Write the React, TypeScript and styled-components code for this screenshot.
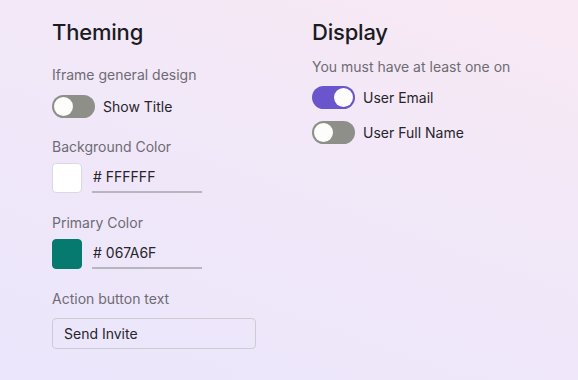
import React, { FC } from 'react';
import styled, { createGlobalStyle } from 'styled-components';

const GlobalStyle = createGlobalStyle`
    html, body {
        margin: 0;
        padding: 0;
    }
    body {
        font-family: Inter, "Noto Sans", "Liberation Sans", sans-serif;
    }
`;

const Page = styled.div`
    width: 578px;
    height: 380px;
    box-sizing: border-box;
    padding: 17px 52px 0 52px;
    display: grid;
    grid-template-columns: 260px 1fr;
    background: linear-gradient(200deg, #f9e9f4 0%, #f1e8f8 45%, #ebe6fc 100%);
    overflow: hidden;
`;

const Column = styled.div`
    display: flex;
    flex-direction: column;
`;

const Heading = styled.h2`
    margin: 0;
    font-size: 22px;
    font-weight: 500;
    line-height: 30px;
    color: #1c1b1f;
    letter-spacing: -0.2px;
`;

const Label = styled.div<{ $top: number }>`
    margin-top: ${(p) => p.$top}px;
    font-size: 14px;
    line-height: 18px;
    color: #6f6b73;
`;

const ToggleRow = styled.div<{ $top: number }>`
    margin-top: ${(p) => p.$top}px;
    display: flex;
    align-items: center;
    gap: 8px;
    font-size: 14px;
    color: #27252b;
`;

const Track = styled.div<{ $on?: boolean }>`
    width: 43px;
    height: 23px;
    box-sizing: border-box;
    padding: 2px;
    border-radius: 12px;
    background: ${(p) => (p.$on ? '#6b55cc' : '#8f8f89')};
    display: flex;
    justify-content: ${(p) => (p.$on ? 'flex-end' : 'flex-start')};
`;

const Knob = styled.div`
    width: 19px;
    height: 19px;
    border-radius: 50%;
    background: #fdfdfb;
`;

const ColorRow = styled.div`
    margin-top: 7px;
    display: flex;
    align-items: flex-end;
    gap: 10px;
`;

const Swatch = styled.div<{ $color: string }>`
    width: 30px;
    height: 30px;
    box-sizing: border-box;
    border-radius: 4px;
    background: ${(p) => p.$color};
    border: 1px solid ${(p) => (p.$color === '#FFFFFF' ? '#dcd8df' : p.$color)};
`;

const HexField = styled.div`
    width: 110px;
    height: 30px;
    box-sizing: border-box;
    padding: 0 0 2px 1px;
    display: flex;
    align-items: center;
    font-size: 14px;
    color: #27252b;
    border-bottom: 2px solid #b9b5c0;
`;

const TextInput = styled.div`
    margin-top: 10px;
    width: 204px;
    height: 31px;
    box-sizing: border-box;
    padding: 0 11px;
    display: flex;
    align-items: center;
    border: 1px solid #cfcbd2;
    border-radius: 4px;
    font-size: 14px;
    color: #27252b;
`;

interface IToggle {
    on?: boolean;
    label: string;
    top: number;
}

const Toggle: FC<IToggle> = (props) => (
    <ToggleRow $top={props.top}>
        <Track $on={props.on}>
            <Knob />
        </Track>
        <span>{props.label}</span>
    </ToggleRow>
);

const ColorPicker: FC<{ color: string }> = (props) => (
    <ColorRow>
        <Swatch $color={props.color} />
        <HexField># {props.color.replace('#', '')}</HexField>
    </ColorRow>
);

const App: FC = () => {
    return (
        <>
            <GlobalStyle />
            <Page>
                <Column>
                    <Heading>Theming</Heading>
                    <Label $top={19}>Iframe general design</Label>
                    <Toggle label="Show Title" top={11} />
                    <Label $top={20}>Background Color</Label>
                    <ColorPicker color="#FFFFFF" />
                    <Label $top={21}>Primary Color</Label>
                    <ColorPicker color="#067A6F" />
                    <Label $top={21}>Action button text</Label>
                    <TextInput>Send Invite</TextInput>
                </Column>
                <Column>
                    <Heading>Display</Heading>
                    <Label $top={11}>You must have at least one on</Label>
                    <Toggle on label="User Email" top={10} />
                    <Toggle label="User Full Name" top={12} />
                </Column>
            </Page>
        </>
    );
};

export default App;
